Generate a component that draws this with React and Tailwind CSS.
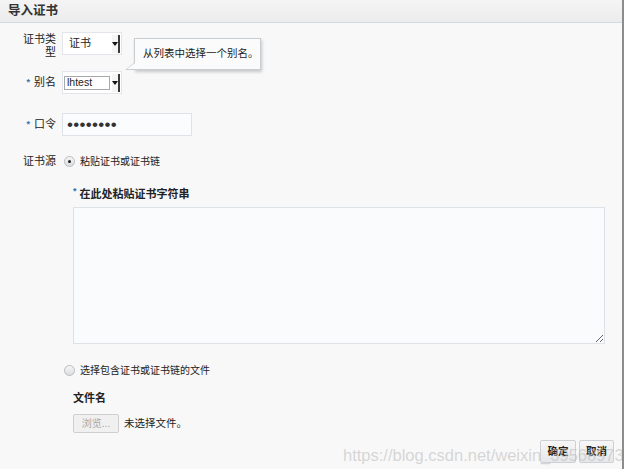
import React from "react";

const font = { fontFamily: '"Liberation Sans", "Noto Sans CJK SC", sans-serif' };

function Arrow() {
  return (
    <div className="flex h-[18px] w-[8px] items-center justify-center border-r-2 border-[#3a3a3a] bg-[#f4f4f4]">
      <div className="h-0 w-0 border-x-[3px] border-t-[4px] border-x-transparent border-t-[#111]" />
    </div>
  );
}

function Radio({ checked }) {
  return (
    <div className="flex h-[11px] w-[11px] items-center justify-center rounded-full border border-[#b8bcc0] bg-gradient-to-b from-[#f6f6f6] to-[#dedede]">
      {checked && <div className="h-[3px] w-[3px] rounded-full bg-[#222]" />}
    </div>
  );
}

export default function App() {
  return (
    <div
      className="relative flex h-[469px] w-[624px] flex-col overflow-hidden border-r-2 border-[#8c8c8c] bg-[#f8f8f8] text-[#222]"
      style={font}
    >
      <div className="flex h-[23px] shrink-0 items-center border-b border-[#d2dbe3] bg-gradient-to-b from-[#f4f4f4] to-[#ececec] pl-[8px]">
        <span className="text-[12.5px] font-bold text-[#333]">导入证书</span>
      </div>

      <div className="flex flex-col">
        <div className="mt-[9px] flex">
          <div className="w-[56px] pt-[1px] text-right text-[11px] leading-[13px]">
            证书类
            <br />型
          </div>
          <div className="ml-[6px] flex h-[23px] w-[60px] items-center justify-between border border-[#e2e6ea] bg-white pl-[6px] pr-[1px]">
            <span className="text-[11px]">证书</span>
            <Arrow />
          </div>
        </div>

        <div className="mt-[12px] flex items-center">
          <div className="w-[56px] text-right text-[11px] leading-[13px]">
            <span className="mr-[4px] align-top text-[9px] font-bold text-[#3470b5]">*</span>
            别名
          </div>
          <div className="ml-[6px] flex h-[23px] w-[60px] items-center justify-between border border-[#e2e6ea] bg-white pl-[1px] pr-[1px]">
            <div className="flex h-[14px] w-[46px] items-center border border-[#a9a9a9] bg-white pl-[2px] text-[10.5px] leading-none">
              lhtest
            </div>
            <Arrow />
          </div>
        </div>

        <div className="mt-[19px] flex items-center">
          <div className="w-[56px] text-right text-[11px] leading-[13px]">
            <span className="mr-[4px] align-top text-[9px] font-bold text-[#3470b5]">*</span>
            口令
          </div>
          <div className="ml-[6px] flex h-[23px] w-[130px] items-center border border-[#dde3e8] bg-[#fbfcfd] pl-[4px]">
            <span className="text-[17px] leading-none tracking-[0.3px] text-[#333]">••••••••</span>
          </div>
        </div>

        <div className="mt-[18px] flex h-[14px] items-center">
          <div className="w-[56px] text-right text-[11px] leading-[13px]">证书源</div>
          <div className="ml-[8px]">
            <Radio checked />
          </div>
          <span className="ml-[5px] text-[10px]">粘贴证书或证书链</span>
        </div>

        <div className="ml-[73px] mt-[19px] flex h-[14px] items-center text-[11px] font-bold">
          <span className="mr-[3px] self-start text-[9px] leading-[8px] text-[#3470b5]">*</span>
          在此处粘贴证书字符串
        </div>

        <textarea
          readOnly
          className="ml-[73px] mt-[6px] h-[137px] w-[532px] border border-[#dde2e6] bg-[#f9fbfd] outline-none"
        />

        <div className="ml-[64px] mt-[19px] flex h-[14px] items-center">
          <Radio />
          <span className="ml-[5px] text-[10px]">选择包含证书或证书链的文件</span>
        </div>

        <div className="ml-[73px] mt-[14px] flex h-[14px] items-center text-[11px] font-bold">文件名</div>

        <div className="ml-[73px] mt-[9px] flex items-center">
          <div className="flex h-[19px] w-[46px] items-center justify-center rounded-[2px] border border-[#cfcfcf] bg-[#f0f0f0] text-[10px] text-[#a8a8a8]">
            浏览...
          </div>
          <span className="ml-[5px] text-[10.5px]">未选择文件。</span>
        </div>

        <div className="mr-[8px] mt-[7px] flex justify-end gap-[3px]">
          <div className="flex h-[23px] w-[36px] items-center justify-center rounded-[2px] border border-[#cdd1d5] bg-gradient-to-b from-[#f7f7f7] to-[#e6e7e9] text-[10.5px] font-bold">
            确定
          </div>
          <div className="flex h-[23px] w-[35px] items-center justify-center rounded-[2px] border border-[#cdd1d5] bg-gradient-to-b from-[#f7f7f7] to-[#e6e7e9] text-[10.5px] font-bold">
            取消
          </div>
        </div>
      </div>

      <div className="absolute left-[134px] top-[38px] flex h-[32px] w-[127px] items-center border border-[#c8cdd2] bg-[#fbfbfb] pl-[8px] text-[10.5px] shadow-[1px_2px_3px_rgba(0,0,0,0.2)]">
        从列表中选择一个别名。
        <div className="absolute -left-[10px] bottom-[-1px] h-0 w-0 border-b-[8px] border-l-[10px] border-b-[#c8cdd2] border-l-transparent" />
        <div className="absolute -left-[8px] bottom-0 h-0 w-0 border-b-[6px] border-l-[8px] border-b-[#fbfbfb] border-l-transparent" />
      </div>

      <div className="pointer-events-none absolute left-[343px] top-[443px] text-[16.5px] text-[rgba(190,190,190,0.6)]">
        https://blog.csdn.net/weixin_39568973
      </div>
    </div>
  );
}
